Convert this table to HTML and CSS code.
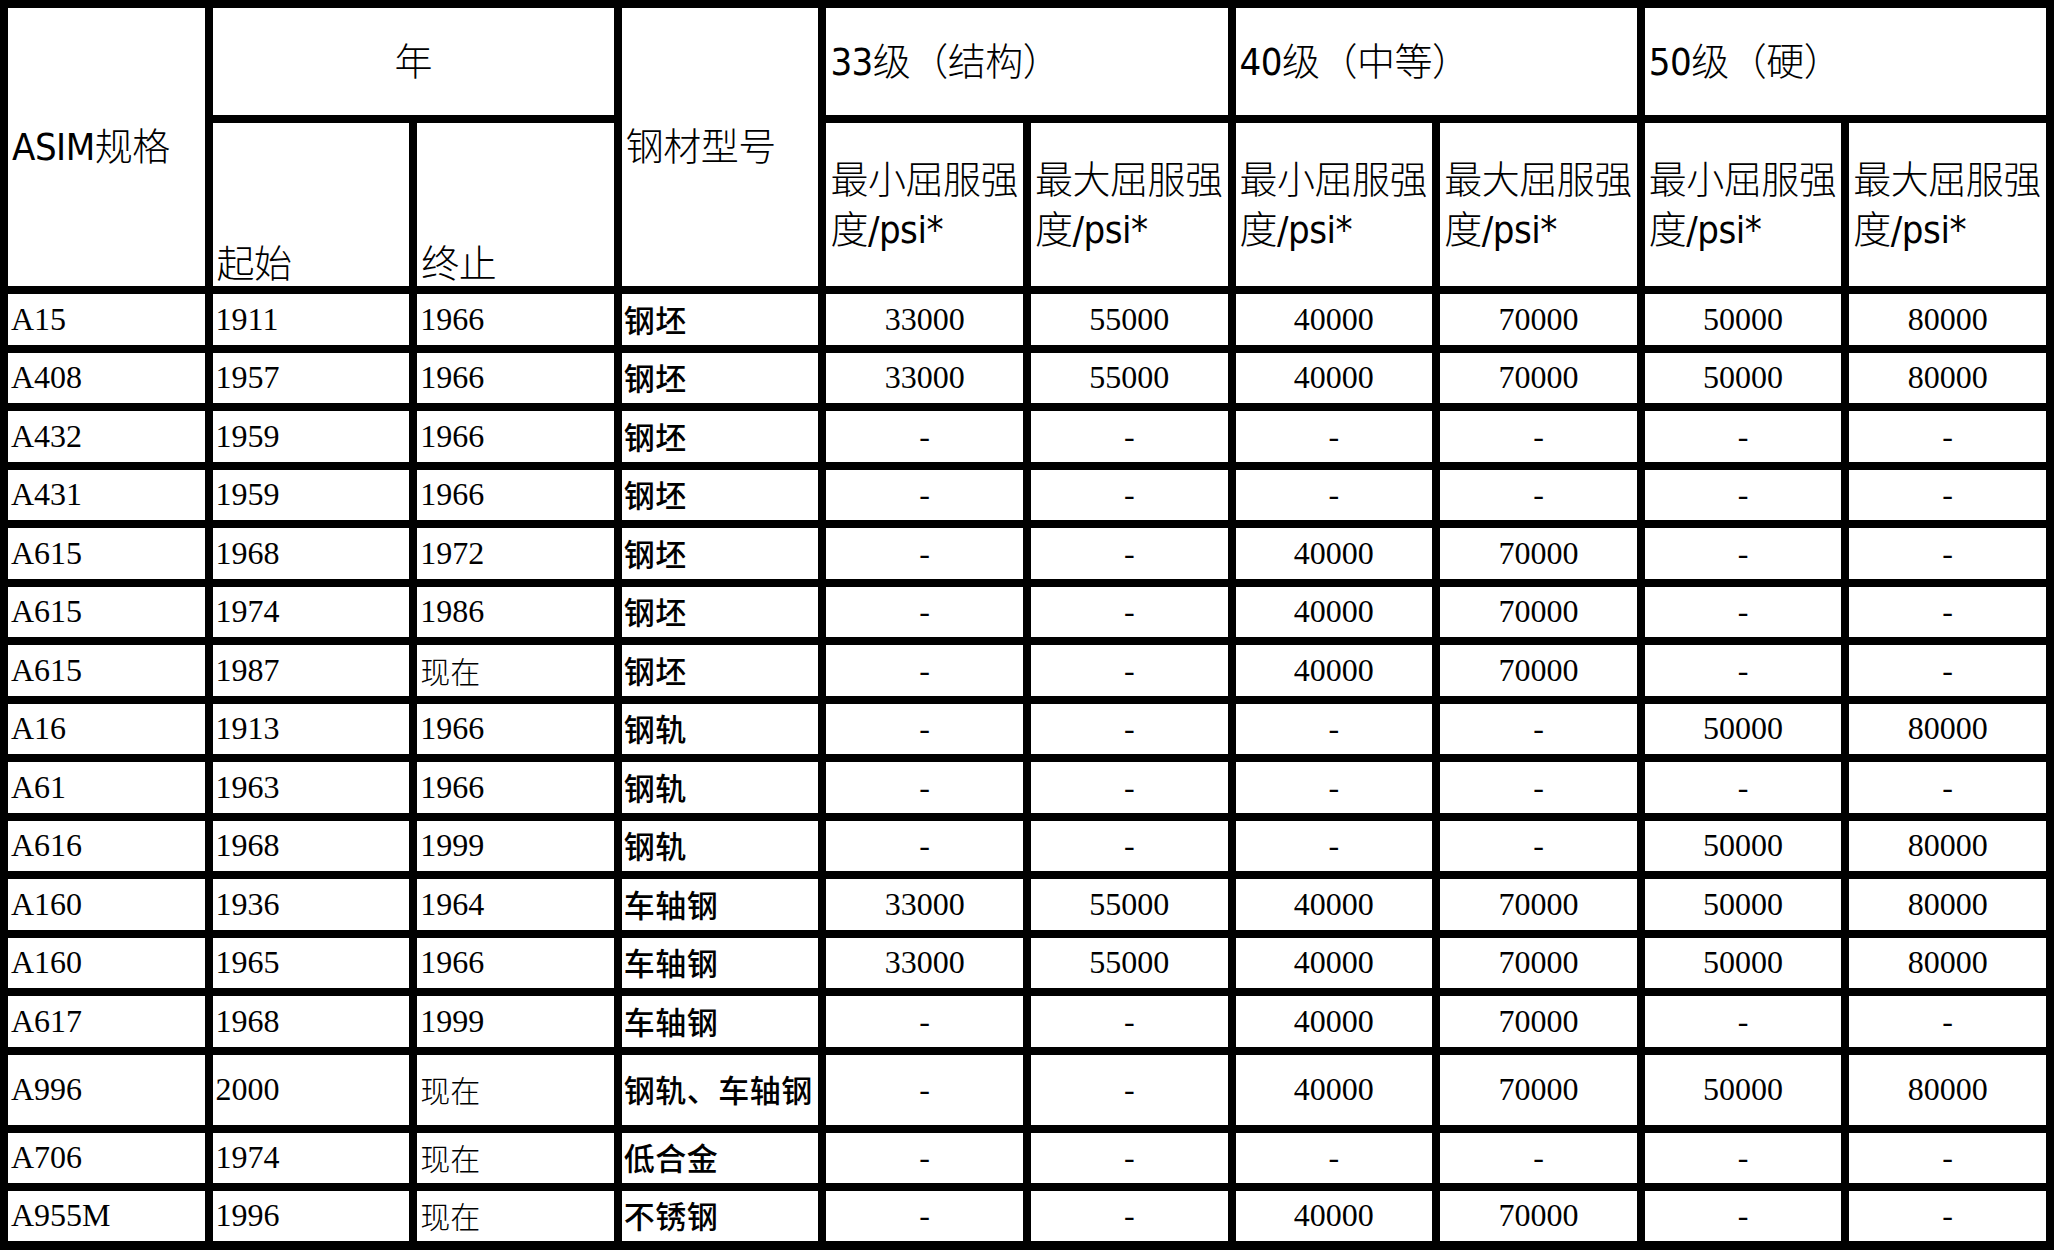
FILE: index.html
```html
<!DOCTYPE html>
<html lang="zh-CN">
<head>
<meta charset="utf-8">
<title>ASIM规格</title>
<link rel="stylesheet" href="styles.css">
</head>
<body>
<table class="grid">
  <colgroup>
    <col><col><col><col><col><col><col><col><col><col>
  </colgroup>
  <thead>
    <tr class="h1">
      <th rowspan="2" class="hd mid">ASIM规格</th>
      <th colspan="2" class="hd center">年</th>
      <th rowspan="2" class="hd mid">钢材型号</th>
      <th colspan="2" class="hd">33级（结构）</th>
      <th colspan="2" class="hd">40级（中等）</th>
      <th colspan="2" class="hd">50级（硬）</th>
    </tr>
    <tr class="h2">
      <th class="hd bottom">起始</th>
      <th class="hd bottom">终止</th>
      <th class="hd">最小屈服强度/psi*</th>
      <th class="hd">最大屈服强度/psi*</th>
      <th class="hd">最小屈服强度/psi*</th>
      <th class="hd">最大屈服强度/psi*</th>
      <th class="hd">最小屈服强度/psi*</th>
      <th class="hd">最大屈服强度/psi*</th>
    </tr>
  </thead>
  <tbody>
    <tr><td>A15</td><td>1911</td><td>1966</td><td class="type">钢坯</td><td class="num">33000</td><td class="num">55000</td><td class="num">40000</td><td class="num">70000</td><td class="num">50000</td><td class="num">80000</td></tr>
    <tr><td>A408</td><td>1957</td><td>1966</td><td class="type">钢坯</td><td class="num">33000</td><td class="num">55000</td><td class="num">40000</td><td class="num">70000</td><td class="num">50000</td><td class="num">80000</td></tr>
    <tr><td>A432</td><td>1959</td><td>1966</td><td class="type">钢坯</td><td class="num">-</td><td class="num">-</td><td class="num">-</td><td class="num">-</td><td class="num">-</td><td class="num">-</td></tr>
    <tr><td>A431</td><td>1959</td><td>1966</td><td class="type">钢坯</td><td class="num">-</td><td class="num">-</td><td class="num">-</td><td class="num">-</td><td class="num">-</td><td class="num">-</td></tr>
    <tr><td>A615</td><td>1968</td><td>1972</td><td class="type">钢坯</td><td class="num">-</td><td class="num">-</td><td class="num">40000</td><td class="num">70000</td><td class="num">-</td><td class="num">-</td></tr>
    <tr><td>A615</td><td>1974</td><td>1986</td><td class="type">钢坯</td><td class="num">-</td><td class="num">-</td><td class="num">40000</td><td class="num">70000</td><td class="num">-</td><td class="num">-</td></tr>
    <tr><td>A615</td><td>1987</td><td class="now">现在</td><td class="type">钢坯</td><td class="num">-</td><td class="num">-</td><td class="num">40000</td><td class="num">70000</td><td class="num">-</td><td class="num">-</td></tr>
    <tr><td>A16</td><td>1913</td><td>1966</td><td class="type">钢轨</td><td class="num">-</td><td class="num">-</td><td class="num">-</td><td class="num">-</td><td class="num">50000</td><td class="num">80000</td></tr>
    <tr><td>A61</td><td>1963</td><td>1966</td><td class="type">钢轨</td><td class="num">-</td><td class="num">-</td><td class="num">-</td><td class="num">-</td><td class="num">-</td><td class="num">-</td></tr>
    <tr><td>A616</td><td>1968</td><td>1999</td><td class="type">钢轨</td><td class="num">-</td><td class="num">-</td><td class="num">-</td><td class="num">-</td><td class="num">50000</td><td class="num">80000</td></tr>
    <tr><td>A160</td><td>1936</td><td>1964</td><td class="type">车轴钢</td><td class="num">33000</td><td class="num">55000</td><td class="num">40000</td><td class="num">70000</td><td class="num">50000</td><td class="num">80000</td></tr>
    <tr><td>A160</td><td>1965</td><td>1966</td><td class="type">车轴钢</td><td class="num">33000</td><td class="num">55000</td><td class="num">40000</td><td class="num">70000</td><td class="num">50000</td><td class="num">80000</td></tr>
    <tr><td>A617</td><td>1968</td><td>1999</td><td class="type">车轴钢</td><td class="num">-</td><td class="num">-</td><td class="num">40000</td><td class="num">70000</td><td class="num">-</td><td class="num">-</td></tr>
    <tr class="tall"><td>A996</td><td>2000</td><td class="now">现在</td><td class="type">钢轨、车轴钢</td><td class="num">-</td><td class="num">-</td><td class="num">40000</td><td class="num">70000</td><td class="num">50000</td><td class="num">80000</td></tr>
    <tr class="last"><td>A706</td><td>1974</td><td class="now">现在</td><td class="type">低合金</td><td class="num">-</td><td class="num">-</td><td class="num">-</td><td class="num">-</td><td class="num">-</td><td class="num">-</td></tr>
    <tr class="last"><td>A955M</td><td>1996</td><td class="now">现在</td><td class="type">不锈钢</td><td class="num">-</td><td class="num">-</td><td class="num">40000</td><td class="num">70000</td><td class="num">-</td><td class="num">-</td></tr>
  </tbody>
</table>
</body>
</html>
```

FILE: styles.css
```css
html, body {
  margin: 0;
  padding: 0;
  background: #000000;
}

.grid {
  width: 2054px;
  table-layout: fixed;
  border-collapse: separate;
  border-spacing: 8px;
  background: #000000;
  color: #000000;
  margin: 0;
}

.grid col {
  width: 10%;
}

.grid th,
.grid td {
  background: #ffffff;
  padding: 0 4px;
  overflow: hidden;
}

.hd {
  font-family: "DejaVu Sans Condensed", "DejaVu Sans", "Noto Sans CJK SC", sans-serif;
  font-stretch: condensed;
  font-weight: 300;
  font-size: 38px;
  line-height: 50px;
  text-align: left;
  vertical-align: middle;
  letter-spacing: -0.5px;
}

.hd.center {
  text-align: center;
}

.hd.bottom {
  vertical-align: bottom;
  padding-bottom: 0;
  line-height: 44px;
}

.h1 th {
  height: 107px;
}

.h2 th {
  height: 163px;
}

.grid td {
  font-family: "Liberation Serif", "Times New Roman", serif;
  font-size: 32px;
  line-height: 36px;
  height: 50.5px;
  text-align: left;
  vertical-align: middle;
  padding: 0 3px 1px 3px;
  box-sizing: border-box;
}

.grid td.num {
  font-family: "Liberation Serif", "Times New Roman", serif;
  text-align: center;
}

.grid td.type {
  font-family: "Noto Sans CJK SC", sans-serif;
  font-weight: 500;
  font-size: 31px;
  letter-spacing: 0.5px;
  padding: 0 2px 1px 2px;
}

.grid td.now {
  font-family: "Noto Sans CJK SC", sans-serif;
  font-weight: 300;
  font-size: 30px;
}

.grid tr.tall td {
  height: 70px;
}

.grid tr.last td {
  height: 50px;
}
```
